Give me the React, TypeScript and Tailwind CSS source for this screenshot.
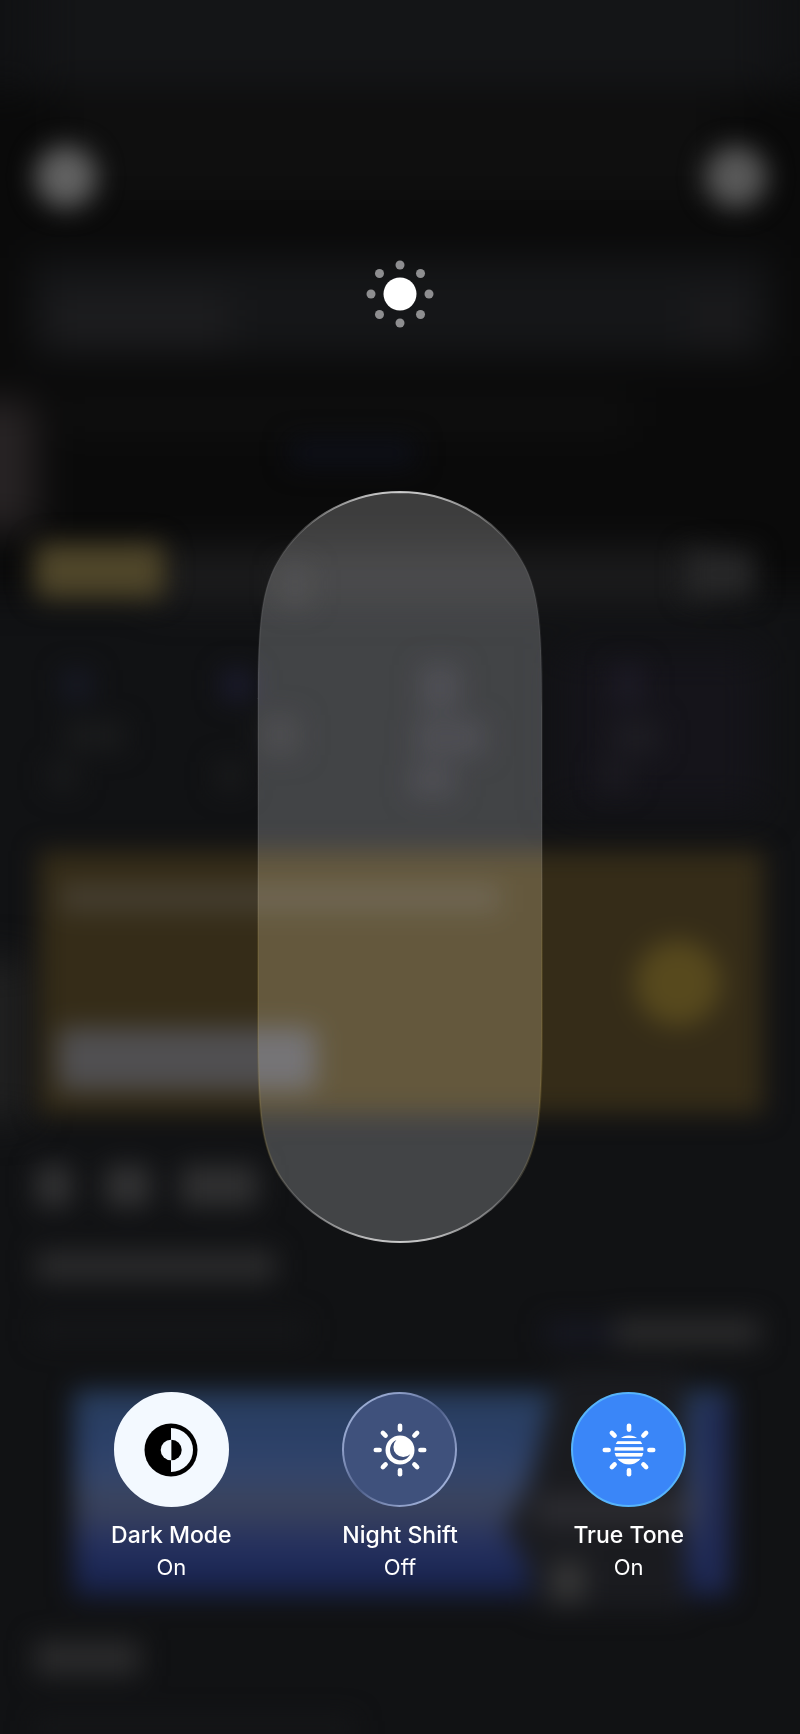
import { useState } from "react";
import clsx from "clsx";

const RAY_ANGLES = [0, 45, 90, 135, 180, 225, 270, 315];

const PILL_PATH =
  "M143 1 A143 143 0 0 1 260 62 C281.8 93 285 129 285 216 V536 C285 623 281.8 659 260 690 A143 143 0 0 1 143 751 A143 143 0 0 1 26 690 C4.2 659 1 623 1 536 V216 C1 129 4.2 93 26 62 A143 143 0 0 1 143 1 Z";

function Backdrop() {
  return (
    <svg
      aria-hidden="true"
      className="absolute inset-0 h-full w-full"
      viewBox="0 0 800 1734"
      preserveAspectRatio="none"
      colorInterpolationFilters="sRGB"
    >
      <defs>
        <filter id="soft" x="-60" y="-60" width="920" height="1854" filterUnits="userSpaceOnUse">
          <feGaussianBlur stdDeviation="13" />
        </filter>
        <filter id="softer" x="-60" y="-60" width="920" height="1854" filterUnits="userSpaceOnUse">
          <feGaussianBlur stdDeviation="19" />
        </filter>
        <linearGradient id="banner" x1="0" y1="0" x2="0" y2="1">
          <stop offset="0" stopColor="#283d5c" />
          <stop offset="0.25" stopColor="#2b4068" />
          <stop offset="0.42" stopColor="#34456a" />
          <stop offset="0.56" stopColor="#3b435a" />
          <stop offset="0.72" stopColor="#28335f" />
          <stop offset="0.88" stopColor="#1b2756" />
          <stop offset="1" stopColor="#182040" />
        </linearGradient>
      </defs>
      <rect width="800" height="1734" fill="#111214" />

      <g filter="url(#softer)">
        <rect x="-60" y="90" width="920" height="500" fill="#0a0a0a" />
        <rect x="40" y="-60" width="730" height="150" fill="#141517" />
        <rect x="60" y="100" width="660" height="100" fill="#0f0f0f" />
        <rect x="30" y="258" width="740" height="98" fill="#151618" />
        <rect x="50" y="295" width="180" height="50" fill="#1d1d1f" />
        <rect x="690" y="295" width="55" height="50" fill="#1b1b1d" />
        <rect x="60" y="400" width="570" height="30" fill="#101010" />
        <rect x="-60" y="400" width="96" height="130" fill="#272324" />
        <rect x="150" y="550" width="560" height="50" fill="#1c1c1d" />
        <rect x="-60" y="960" width="90" height="160" fill="#202020" />
        <rect x="560" y="650" width="200" height="160" fill="#15141a" />
      </g>

      <g filter="url(#soft)">
        <circle cx="66" cy="177" r="31" fill="#626262" />
        <circle cx="736" cy="177" r="31" fill="#595959" />
        <rect x="290" y="440" width="125" height="26" fill="#0e1019" />
        <rect x="34" y="543" width="131" height="56" rx="10" fill="#4f462a" />
        <rect x="280" y="565" width="30" height="40" fill="#232324" />
        <rect x="685" y="550" width="70" height="48" fill="#272728" />

        {/* shortcut grid */}
        <rect x="62" y="670" width="30" height="30" fill="#171925" />
        <rect x="222" y="670" width="30" height="30" fill="#1b1b2e" />
        <rect x="420" y="665" width="40" height="45" fill="#212125" />
        <rect x="612" y="665" width="32" height="40" fill="#1c1a24" />
        <rect x="65" y="722" width="60" height="28" fill="#1a1b1c" />
        <rect x="260" y="715" width="40" height="40" fill="#1e1e20" />
        <rect x="415" y="720" width="70" height="36" fill="#202024" />
        <rect x="612" y="720" width="48" height="34" fill="#1d1c22" />
        <rect x="48" y="762" width="30" height="28" fill="#191a1b" />
        <rect x="215" y="762" width="30" height="28" fill="#191a1b" />
        <rect x="410" y="765" width="45" height="32" fill="#202024" />
        <rect x="600" y="762" width="32" height="28" fill="#1b1a20" />

        {/* promo card */}
        <rect x="39" y="851" width="725" height="263" fill="#352c18" />
        <rect x="60" y="884" width="440" height="28" fill="#453e30" />
        <rect x="58" y="1028" width="258" height="62" rx="8" fill="#504f51" />
        <circle cx="678" cy="983" r="43" fill="#57491d" />

        <rect x="36" y="1165" width="36" height="42" fill="#323233" />
        <rect x="105" y="1165" width="46" height="42" fill="#323233" />
        <rect x="180" y="1165" width="78" height="42" fill="#303031" />
        <rect x="36" y="1250" width="240" height="32" fill="#2a2a2b" />
        <rect x="36" y="1318" width="270" height="24" fill="#151618" />
        <rect x="545" y="1322" width="80" height="22" fill="#171823" />
        <rect x="615" y="1318" width="145" height="28" fill="#2a2a2b" />

        {/* banner */}
        <rect x="74" y="1390" width="656" height="207" fill="url(#banner)" />
        <path d="M558 1370 H686 V1610 H535 L525 1560 L505 1530 L530 1480 Z" fill="#1a1b1f" />
        <rect x="535" y="1494" width="150" height="32" fill="#2b2b30" />
        <rect x="552" y="1562" width="32" height="40" fill="#373737" />
        <rect x="702" y="1400" width="26" height="190" fill="#202a55" />

        <rect x="34" y="1640" width="106" height="36" fill="#2a2a2b" />
        <rect x="34" y="1718" width="320" height="20" fill="#161719" />
      </g>
    </svg>
  );
}

function BrightnessIcon() {
  return (
    <svg aria-hidden="true" width="68" height="68" viewBox="-34 -34 68 68" fill="#8e8e90">
      <circle r="16.5" fill="#fff" />
      {RAY_ANGLES.map((a) => (
        <circle key={a} cx="29" r="4.5" transform={`rotate(${a})`} />
      ))}
    </svg>
  );
}

function Rays() {
  return (
    <g stroke="#fff" strokeWidth="4.6" strokeLinecap="round">
      {RAY_ANGLES.map((a) => (
        <line key={a} x1="20.4" x2="24.2" transform={`rotate(${a})`} />
      ))}
    </g>
  );
}

function DarkModeIcon() {
  return (
    <svg aria-hidden="true" width="56" height="56" viewBox="-28 -28 56 56">
      <circle r="26.5" fill="#000" />
      <path d="M0 -22 A22 22 0 0 1 0 22 Z" fill="#f3f9ff" />
      <circle r="10.3" fill="#f3f9ff" />
      <path d="M0.4 -10.3 A10.3 10.3 0 0 1 0.4 10.3 Z" fill="#000" />
    </svg>
  );
}

function NightShiftIcon() {
  return (
    <svg aria-hidden="true" width="56" height="56" viewBox="-28 -28 56 56">
      <Rays />
      <circle r="14.5" fill="#fff" />
      <path d="M-3.6 -10 A10.6 10.6 0 1 0 10.2 4.2 A9.4 9.4 0 0 1 -3.6 -10 Z" fill="#3f517c" />
    </svg>
  );
}

function TrueToneIcon() {
  return (
    <svg aria-hidden="true" width="56" height="56" viewBox="-28 -28 56 56">
      <Rays />
      <clipPath id="tone-disc">
        <circle r="14.5" />
      </clipPath>
      <g clipPath="url(#tone-disc)" fill="#fff">
        <rect x="-15" y="-15" width="30" height="3" />
        <rect x="-15" y="-8.8" width="30" height="2.8" />
        <rect x="-15" y="-2.8" width="30" height="3.4" />
        <rect x="-15" y="3" width="30" height="3.6" />
        <rect x="-15" y="8.8" width="30" height="6" />
      </g>
    </svg>
  );
}

function BrightnessSlider() {
  const [level, setLevel] = useState(0);
  const fill = (level / 100) * 752;

  return (
    <div className="relative h-[752px] w-[286px]">
      {/* glass boosts the colours behind it */}
      <div className="absolute inset-0 backdrop-saturate-[1.7]" style={{ clipPath: `path("${PILL_PATH}")` }} />
      <svg aria-hidden="true" className="relative h-full w-full" viewBox="0 0 286 752">
        <defs>
          <linearGradient id="rim" x1="0" y1="0" x2="0" y2="1">
            <stop offset="0" stopColor="#fff" stopOpacity="0.75" />
            <stop offset="0.02" stopColor="#fff" stopOpacity="0.5" />
            <stop offset="0.05" stopColor="#fff" stopOpacity="0.2" />
            <stop offset="0.09" stopColor="#fff" stopOpacity="0.05" />
            <stop offset="0.5" stopColor="#fff" stopOpacity="0.06" />
            <stop offset="0.6" stopColor="#b39a45" stopOpacity="0.15" />
            <stop offset="0.88" stopColor="#b39a45" stopOpacity="0.2" />
            <stop offset="0.94" stopColor="#fff" stopOpacity="0.2" />
            <stop offset="0.98" stopColor="#fff" stopOpacity="0.5" />
            <stop offset="1" stopColor="#fff" stopOpacity="0.75" />
          </linearGradient>
          <clipPath id="pill">
            <path d={PILL_PATH} />
          </clipPath>
        </defs>
        <path d={PILL_PATH} fill="#fff" fillOpacity="0.21" />
        <rect y={752 - fill} width="286" height={fill} fill="#fff" clipPath="url(#pill)" />
        <path d={PILL_PATH} fill="none" stroke="url(#rim)" strokeWidth="2" />
      </svg>
      <input
        type="range"
        aria-label="Brightness"
        min={0}
        max={100}
        value={level}
        onChange={(e) => setLevel(Number(e.target.value))}
        className="absolute inset-0 h-full w-full cursor-pointer appearance-none bg-transparent [direction:rtl] [writing-mode:vertical-lr] [&::-webkit-slider-thumb]:appearance-none"
      />
    </div>
  );
}

const MODES = [
  {
    id: "dark",
    label: "Dark Mode",
    icon: <DarkModeIcon />,
    on: "border-[#f3f9ff] bg-[#f3f9ff]",
  },
  {
    id: "night",
    label: "Night Shift",
    icon: <NightShiftIcon />,
    on: "border-orange-300 bg-orange-500",
  },
  {
    id: "tone",
    label: "True Tone",
    icon: <TrueToneIcon />,
    on: "border-[#57b4fb] bg-[#3a86f8]",
  },
];

export default function App() {
  const [active, setActive] = useState<Record<string, boolean>>({ dark: true, night: false, tone: true });

  return (
    <main className="relative min-h-screen overflow-hidden bg-[#111214] font-['Inter','Liberation_Sans',sans-serif] text-white">
      <Backdrop />

      <div className="relative flex flex-col items-center px-6 pt-[260px] pb-20">
        <BrightnessIcon />

        <div className="mt-[163px]">
          <BrightnessSlider />
        </div>

        <div className="mt-[149px] grid w-full max-w-[686px] grid-cols-3">
          {MODES.map((m) => (
            <button
              key={m.id}
              type="button"
              aria-pressed={active[m.id]}
              onClick={() => setActive({ ...active, [m.id]: !active[m.id] })}
              className="flex cursor-pointer flex-col items-center"
            >
              <span
                className={clsx(
                  "flex size-[115px] items-center justify-center rounded-full border-2",
                  active[m.id]
                    ? m.on
                    : "border-transparent [background:linear-gradient(#3f517c,#3f517c)_padding-box,linear-gradient(135deg,#a9bbe0,#8f9fc8_25%,#50618c_50%,#8f9fc8_75%,#b4c6ec)_border-box]"
                )}
              >
                {m.icon}
              </span>
              <span className="mt-3 text-[23px] leading-8 font-medium">{m.label}</span>
              <span className="text-[22px] leading-8">{active[m.id] ? "On" : "Off"}</span>
            </button>
          ))}
        </div>
      </div>
    </main>
  );
}
